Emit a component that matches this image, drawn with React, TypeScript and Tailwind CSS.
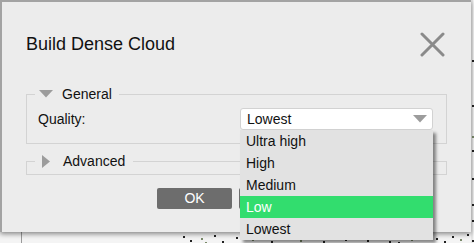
const qualities = ["Ultra high", "High", "Medium", "Low", "Lowest"];

const dots = [
  [183, 236], [190, 240], [201, 238], [214, 235], [222, 241], [236, 237], [245, 234], [252, 239],
  [262, 236], [271, 241], [280, 238], [291, 235], [300, 240], [312, 237], [323, 241], [334, 236],
  [345, 239], [356, 235], [367, 240], [378, 237], [389, 241], [400, 236], [411, 239], [422, 235],
  [436, 238], [444, 241], [452, 236], [460, 239], [467, 234], [472, 240], [472, 60], [472, 105],
  [472, 136], [472, 150], [472, 178], [472, 204], [472, 220], [205, 242], [318, 234], [398, 242],
];

export default function App() {
  return (
    <div className="relative w-[474px] h-[243px] overflow-hidden bg-[#f4f4f4] font-['Liberation_Sans',Arial,sans-serif] text-[#111]">
      {/* point cloud behind the dialog */}
      <svg className="absolute inset-0" width="474" height="243">
        <line x1="21.5" y1="232" x2="21.5" y2="243" stroke="#9a9a9a" />
        <line x1="472" y1="0" x2="472" y2="243" stroke="#d8d8d8" />
        {dots.map(([x, y], i) => (
          <rect key={i} x={x} y={y} width="2" height="2" fill={i % 5 === 2 ? "#7a8a6a" : "#222"} />
        ))}
      </svg>

      <div className="relative w-[471px] h-[232px] bg-[#ececec] border-t-2 border-l-2 border-[#a3a3a3] shadow-[0_2px_5px_rgba(0,0,0,0.45)]">
        {/* title bar */}
        <div className="flex items-center justify-between pl-[24px] pr-[26px] pt-[30px]">
          <h1 className="text-[18px] leading-[25px] font-normal">Build Dense Cloud</h1>
          <svg width="25" height="25" viewBox="0 0 25 25">
            <path d="M2 2 L23 23 M23 2 L2 23" stroke="#8a8a8a" strokeWidth="3" strokeLinecap="round" />
          </svg>
        </div>

        {/* General */}
        <fieldset className="ml-[24px] mt-[29px] w-[421px] border border-[#d3d3d3] pb-[13px]">
          <legend className="ml-[8px] flex items-center pl-[4px] pr-[7px] h-[16px] text-[14px] leading-[16px]">
            <span className="flex w-[14px] justify-center">
              <svg width="14" height="8" viewBox="0 0 14 8">
                <path d="M0 0 H14 L7 7.5 Z" fill="#9c9c9c" />
              </svg>
            </span>
            <span className="ml-[9px]">General</span>
          </legend>
          <div className="flex items-center pl-[11px] pr-[13px] mt-[6px]">
            <span className="w-[202px] text-[14px]">Quality:</span>
            <div className="flex flex-1 h-[22px] items-center justify-between bg-white border border-[#d2d2d2] rounded-[3px] pl-[6px] pr-[5px] text-[14px]">
              <span>Lowest</span>
              <svg width="14" height="8" viewBox="0 0 14 8">
                <path d="M0 0 H14 L7 7.5 Z" fill="#9c9c9c" />
              </svg>
            </div>
          </div>
        </fieldset>

        {/* Advanced */}
        <fieldset className="ml-[24px] mt-[9px] w-[421px] border border-[#d3d3d3] pb-[5px]">
          <legend className="ml-[8px] flex items-center pl-[4px] pr-[8px] h-[16px] text-[14px] leading-[16px]">
            <span className="flex w-[14px] justify-center">
              <svg width="8" height="13" viewBox="0 0 8 13">
                <path d="M0 0 L8 6.5 L0 13 Z" fill="#9c9c9c" />
              </svg>
            </span>
            <span className="ml-[10px]">Advanced</span>
          </legend>
        </fieldset>

        {/* buttons (second one sits under the open list) */}
        <div className="flex justify-center gap-[7px] mt-[13px] pr-[2px]">
          <button className="w-[75px] h-[21px] rounded-[2px] bg-[#6d6d6d] text-white text-[14px] leading-[21px]">OK</button>
          <div className="w-[75px] h-[21px] rounded-[2px] bg-[#6d6d6d]" />
        </div>
      </div>

      {/* open combo list */}
      <ul className="absolute left-[240px] top-[130px] w-[193px] bg-[#e2e2e2] shadow-[3px_3px_3px_rgba(0,0,0,0.45)]">
        {qualities.map((q) => (
          <li
            key={q}
            className={
              q === "Low"
                ? "h-[22px] pl-[6px] text-[14px] leading-[22px] bg-[#32dd6e] text-white"
                : "h-[22px] pl-[6px] text-[14px] leading-[22px]"
            }
          >
            {q}
          </li>
        ))}
      </ul>
    </div>
  );
}
